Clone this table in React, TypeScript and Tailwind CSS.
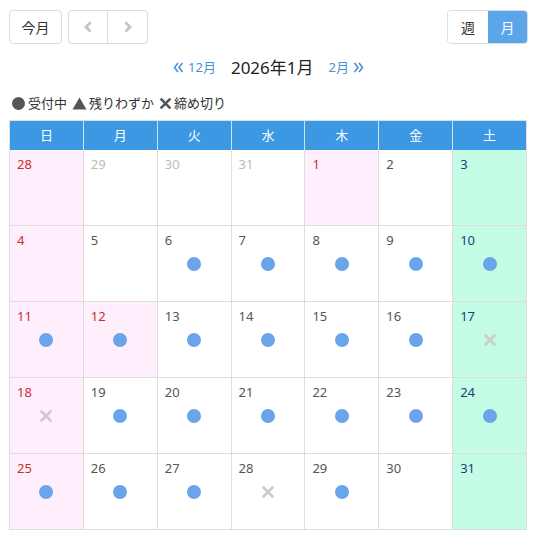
import React from "react";

type Mark = "open" | "closed" | null;

type Day = {
  n: number;
  other?: boolean;
  holiday?: boolean;
  mark?: Mark;
};

const weekdays = ["日", "月", "火", "水", "木", "金", "土"];

// January 2026, Sunday-first
const weeks: Day[][] = [
  [
    { n: 28, other: true },
    { n: 29, other: true },
    { n: 30, other: true },
    { n: 31, other: true },
    { n: 1, holiday: true },
    { n: 2 },
    { n: 3 },
  ],
  [
    { n: 4 },
    { n: 5 },
    { n: 6, mark: "open" },
    { n: 7, mark: "open" },
    { n: 8, mark: "open" },
    { n: 9, mark: "open" },
    { n: 10, mark: "open" },
  ],
  [
    { n: 11, mark: "open" },
    { n: 12, holiday: true, mark: "open" },
    { n: 13, mark: "open" },
    { n: 14, mark: "open" },
    { n: 15, mark: "open" },
    { n: 16, mark: "open" },
    { n: 17, mark: "closed" },
  ],
  [
    { n: 18, mark: "closed" },
    { n: 19, mark: "open" },
    { n: 20, mark: "open" },
    { n: 21, mark: "open" },
    { n: 22, mark: "open" },
    { n: 23, mark: "open" },
    { n: 24, mark: "open" },
  ],
  [
    { n: 25, mark: "open" },
    { n: 26, mark: "open" },
    { n: 27, mark: "open" },
    { n: 28, mark: "closed" },
    { n: 29, mark: "open" },
    { n: 30 },
    { n: 31 },
  ],
];

const Cross = ({ size, color, width }: { size: number; color: string; width: number }) => (
  <svg width={size} height={size} viewBox="0 0 12 12">
    <path d="M1.5 1.5 L10.5 10.5 M10.5 1.5 L1.5 10.5" stroke={color} strokeWidth={width} strokeLinecap="butt" />
  </svg>
);

const Chevron = ({ dir }: { dir: "left" | "right" }) => (
  <svg width="10" height="12" viewBox="0 0 10 12">
    <path
      d={dir === "left" ? "M7.5 1.5 L3 6 L7.5 10.5" : "M2.5 1.5 L7 6 L2.5 10.5"}
      fill="none"
      stroke="#c4c4c4"
      strokeWidth="2.8"
    />
  </svg>
);

// double chevron used by the month links
const Double = ({ dir }: { dir: "left" | "right" }) => (
  <svg width="11" height="11" viewBox="0 0 11 11">
    <path
      d={
        dir === "left"
          ? "M5 1 L1.5 5.5 L5 10 M9.5 1 L6 5.5 L9.5 10"
          : "M1.5 1 L5 5.5 L1.5 10 M6 1 L9.5 5.5 L6 10"
      }
      fill="none"
      stroke="#4a90d6"
      strokeWidth="1.6"
    />
  </svg>
);

export default function App() {
  return (
    <div
      className="w-[537px] bg-white px-[9px] pt-[10px] text-[#333]"
      style={{ fontFamily: '"Noto Sans", "Noto Sans CJK JP", sans-serif' }}
    >
      {/* toolbar */}
      <div className="flex items-center justify-between">
        <div className="flex gap-[6px]">
          <button className="h-[34px] w-[53px] rounded-[4px] border border-[#ddd] bg-white text-[14px] text-[#333]">
            今月
          </button>
          <div className="flex h-[34px] rounded-[4px] border border-[#ddd]">
            <button className="flex w-[39px] items-center justify-center border-r border-[#ddd]">
              <Chevron dir="left" />
            </button>
            <button className="flex w-[39px] items-center justify-center">
              <Chevron dir="right" />
            </button>
          </div>
        </div>
        <div className="flex h-[34px] overflow-hidden rounded-[4px] border border-[#ddd]">
          <button className="w-[40px] bg-white text-[14px] text-[#333]">週</button>
          <button className="w-[39px] bg-[#5ba6ea] text-[14px] text-white">月</button>
        </div>
      </div>

      {/* month nav */}
      <div className="mt-[11px] flex items-center justify-center">
        <a className="flex items-center text-[13px] text-[#4a90d6]">
          <span className="mr-[4px] flex">
            <Double dir="left" />
          </span>
          12月
        </a>
        <span className="mx-[15px] text-[17px] text-[#222]">2026年1月</span>
        <a className="flex items-center text-[13px] text-[#4a90d6]">
          2月
          <span className="ml-[4px] flex">
            <Double dir="right" />
          </span>
        </a>
      </div>

      {/* legend */}
      <div className="mt-[13px] flex items-center text-[13px] text-[#333]">
        <span className="mr-[3px] ml-[3px] inline-block h-[13px] w-[13px] rounded-full bg-[#555]" />
        <span>受付中</span>
        <svg className="ml-[5px] mr-[2px]" width="15" height="13" viewBox="0 0 15 13">
          <path d="M7.5 0.5 L14.5 12.5 L0.5 12.5 Z" fill="#555" />
        </svg>
        <span>残りわずか</span>
        <span className="ml-[5px] mr-[2px] flex">
          <Cross size={13} color="#555" width={2.4} />
        </span>
        <span>締め切り</span>
      </div>

      {/* calendar */}
      <div className="mt-[7px] w-[518px] border-l border-t border-[#ddd]">
        <div className="grid grid-cols-7 bg-[#3d98e3]">
          {weekdays.map((w, i) => (
            <div
              key={w}
              className={`flex h-[29px] items-center justify-center text-[13px] text-white ${
                i < 6 ? "border-r border-[#cfe3f5]" : "border-r border-[#ddd]"
              }`}
            >
              {w}
            </div>
          ))}
        </div>
        {weeks.map((week, wi) => (
          <div key={wi} className="grid grid-cols-7">
            {week.map((d, di) => {
              const sun = di === 0;
              const sat = di === 6;
              const pink = sun || d.holiday;
              const bg = sat ? "bg-[#c5fce6]" : pink ? "bg-[#ffeefb]" : "bg-white";
              const color = pink
                ? "text-[#c9302c]"
                : d.other
                ? "text-[#bbb]"
                : sat
                ? "text-[#1f3d7a]"
                : "text-[#555]";
              return (
                <div
                  key={di}
                  className={`flex h-[76px] flex-col border-b border-r border-[#ddd] px-[7px] pt-[6px] ${bg}`}
                >
                  <span className={`text-[13px] leading-[16px] ${color}`}>{d.n}</span>
                  <div className="mt-[9px] flex h-[14px] items-center justify-center">
                    {d.mark === "open" && (
                      <span className="inline-block h-[14px] w-[14px] rounded-full bg-[#6aa4ea]" />
                    )}
                    {d.mark === "closed" && <Cross size={14} color="#cccccc" width={2.2} />}
                  </div>
                </div>
              );
            })}
          </div>
        ))}
      </div>
    </div>
  );
}
